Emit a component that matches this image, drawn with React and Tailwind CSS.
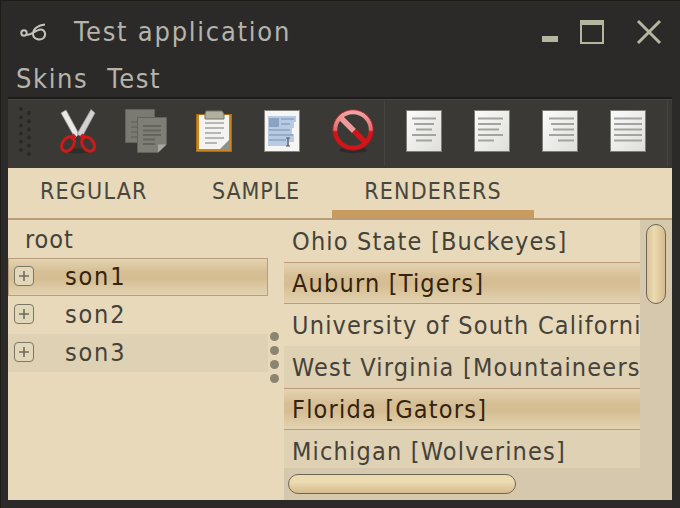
import React from 'react';

const font = { fontFamily: '"DejaVu Sans", sans-serif' };

const Logo = () => (
  <svg width="28" height="18" viewBox="0 0 28 18" fill="none" stroke="#c4c4bc" strokeWidth="2">
    <circle cx="4" cy="10" r="2.7" />
    <path d="M6.5 11.5 C 10 13, 14 8, 20 6.5 C 25 6, 26.5 12, 23.5 15 C 20 18, 13 16, 13 11 C 13 6, 18 2, 25 1.5" />
  </svg>
);

const Scissors = () => (
  <svg width="40" height="46" viewBox="0 0 40 46" fill="none">
    <ellipse cx="20" cy="43" rx="13" ry="2.5" fill="#2e2d2a" />
    <path d="M3 5 L8 2 L21 26 L17 30 Z" fill="#e8e8e6" stroke="#9a9a98" strokeWidth="0.7" />
    <path d="M33 1.5 L37 5 L24 29 L19 26 Z" fill="#d2d2d0" stroke="#9a9a98" strokeWidth="0.7" />
    <path d="M17 27 L13 31 M23 27 L27 31" stroke="#cc1b1b" strokeWidth="4" />
    <ellipse cx="10" cy="36" rx="5.5" ry="8" transform="rotate(35 10 36)" stroke="#cc1b1b" strokeWidth="3" />
    <ellipse cx="30" cy="36" rx="5.5" ry="8" transform="rotate(-35 30 36)" stroke="#cc1b1b" strokeWidth="3" />
  </svg>
);

const Copy = () => (
  <svg width="42" height="44" viewBox="0 0 42 44">
    <rect x="0.5" y="0.5" width="29" height="33" fill="#7b7a72" stroke="#64635b" />
    <path d="M6 13 H24 M6 18 H24 M6 23 H24 M6 28 H24" stroke="#6c6b63" strokeWidth="2" />
    <path d="M12.5 8.5 H41.5 V35 L33 43.5 H12.5 Z" fill="#7f7e76" stroke="#64635b" />
    <path d="M18 17 H36 M18 21.5 H36 M18 26 H36 M18 30.5 H30 M18 35 H30" stroke="#65645c" strokeWidth="2" />
    <path d="M33 43.5 V35.5 H41.5 Z" fill="#a9a9a2" />
  </svg>
);

const Paste = () => (
  <svg width="36" height="42" viewBox="0 0 36 42">
    <rect x="0.5" y="4.5" width="35" height="37" fill="#c9871d" stroke="#a76d14" />
    <path d="M3 5 H33 V39 H3 Z" fill="#f3f3f1" />
    <path d="M9 13 H28 M9 18 H28 M9 23 H25 M9 28 H28 M9 33 H21" stroke="#b6b6b2" strokeWidth="2" />
    <path d="M24 39 L33 30 V39 Z" fill="#8f8f8b" />
    <path d="M10 1 H26 L28 4 V9 H9 V4 Z" fill="#b1b09f" stroke="#75746a" />
  </svg>
);

const SelectAll = () => (
  <svg width="36" height="42" viewBox="0 0 36 42">
    <rect x="0.5" y="0.5" width="35" height="41" fill="#f5f5f3" stroke="#85857f" />
    <path d="M4 6 H32 V12 H30 V18 H28 V24 H30 V32 H25 V36 H4 Z" fill="#b9cbe3" />
    <rect x="5" y="8" width="10" height="9" fill="#8ba2c1" />
    <path d="M17 9 H30 M17 14 H26 M5 20 H26 M5 25 H29 M5 30 H22" stroke="#8ba2c1" strokeWidth="1.6" />
    <path d="M22 28 H26 M24 28 V36 M22 36 H26" stroke="#555" strokeWidth="1.2" />
  </svg>
);

const Stop = () => (
  <svg width="44" height="46" viewBox="0 0 44 46">
    <defs>
      <linearGradient id="ring" x1="0" y1="0" x2="0" y2="1">
        <stop offset="0" stopColor="#f0a6a6" />
        <stop offset="0.5" stopColor="#e66a6a" />
        <stop offset="0.55" stopColor="#d0141a" />
        <stop offset="1" stopColor="#d3151b" />
      </linearGradient>
    </defs>
    <ellipse cx="22" cy="42" rx="14" ry="3" fill="#2c2b29" />
    <path d="M9 9 L23 23" stroke="#ec9a9a" strokeWidth="5.5" />
    <path d="M23 23 L35 35" stroke="#d0151b" strokeWidth="5.5" />
    <circle cx="22" cy="22" r="18" fill="none" stroke="url(#ring)" strokeWidth="4.5" />
    <circle cx="22" cy="22" r="20.2" fill="none" stroke="#b5141a" strokeWidth="0.8" />
  </svg>
);

const Doc = ({ lines }) => (
  <svg width="36" height="42" viewBox="0 0 36 42">
    <defs>
      <linearGradient id="page" x1="0" y1="0" x2="1" y2="1">
        <stop offset="0" stopColor="#fbfbfa" />
        <stop offset="1" stopColor="#dededa" />
      </linearGradient>
    </defs>
    <rect x="0.5" y="0.5" width="35" height="41" fill="url(#page)" stroke="#7e7e78" />
    {lines.map(([x1, x2], i) => (
      <line key={i} x1={x1} x2={x2} y1={8.5 + i * 5.5} y2={8.5 + i * 5.5} stroke="#a3a39f" strokeWidth="2" />
    ))}
  </svg>
);

const Tool = ({ children, className = '' }) => (
  <div className={`w-[68px] flex justify-center items-center pb-[6px] shrink-0 ${className}`}>{children}</div>
);

const Gripper = () => (
  <div className="w-[36px] shrink-0 flex items-center justify-center pb-[6px]">
    <svg width="16" height="50" viewBox="0 0 16 50" fill="#2a2927">
      {[0, 1, 2, 3, 4, 5].map((i) => <circle key={i} cx="3" cy={3 + i * 8.2} r="2" />)}
      {[0, 1, 2, 3, 4, 5].map((i) => <circle key={i} cx="11" cy={7 + i * 8.2} r="2" />)}
    </svg>
  </div>
);

const selected = 'bg-[linear-gradient(to_bottom,#e3d3b2_0%,#d6bf95_35%,#d5bd92_55%,#e3d3b2_100%)] border-y border-[#bb9c7c]';

const ExpandBox = () => (
  <span className="w-[20px] h-[20px] mb-[2px] rounded-[4px] border border-[#7b7666] bg-[#e0d8b8] flex items-center justify-center shrink-0">
    <svg width="12" height="12" viewBox="0 0 12 12" stroke="#6f6b5e" strokeWidth="1.6">
      <path d="M6 1 V11 M1 6 H11" />
    </svg>
  </span>
);

const TreeRow = ({ label, sel, alt }) => (
  <div className={`h-[38px] flex items-center ${alt ? 'bg-[#dfd1b3]' : ''} ${sel ? `${selected} border-x pl-[5px] text-[#33230f]` : 'pl-[6px] text-[#45423a]'}`}>
    <ExpandBox />
    <span className="ml-[31px] tracking-[1.8px]">{label}</span>
  </div>
);

const teams = [
  ['Ohio State [Buckeyes]', ''],
  ['Auburn [Tigers]', 'sel'],
  ['University of South California [Trojans]', ''],
  ['West Virginia [Mountaineers]', 'alt'],
  ['Florida [Gators]', 'sel'],
  ['Michigan [Wolverines]', 'alt'],
];

export default function App() {
  return (
    <div style={font} className="w-[680px] h-[508px] bg-[#2b2a28] border-t border-l border-[#1f1b17] flex flex-col overflow-hidden font-stretch-condensed">
      <div className="h-[62px] shrink-0 flex items-center pl-[19px] pr-[18px] text-[#b4b4ad]">
        <Logo />
        <span className="ml-[26px] text-[27px] tracking-[1.75px]">Test application</span>
        <div className="ml-auto flex items-center">
          <span className="w-[16px] h-[6px] bg-[#b6b6a0] mt-[14px]" />
          <span className="w-[24px] h-[24px] ml-[22px] border-2 border-t-[5px] border-[#b6b6a0]" />
          <svg width="26" height="26" viewBox="0 0 26 26" className="ml-[32px]" stroke="#b6b6a0" strokeWidth="3">
            <path d="M2 2 L24 24 M24 2 L2 24" />
          </svg>
        </div>
      </div>
      <div className="h-[34px] shrink-0 pl-[15px] flex gap-[19px] text-[#b4b4ad] text-[27px] leading-[32px] tracking-[1.6px]">
        <span>Skins</span>
        <span>Test</span>
      </div>
      <div className="flex-1 min-h-0 ml-[7px] mr-[8px] mb-[8px] flex flex-col">
        <div className="h-[71px] shrink-0 bg-[#3a3936] border-t-[2px] border-[#1d1c1a] flex shadow-[inset_0_1px_0_#464542]">
          <Gripper />
          <Tool><Scissors /></Tool>
          <Tool><Copy /></Tool>
          <Tool><Paste /></Tool>
          <Tool><SelectAll /></Tool>
          <Tool className="pl-[6px]"><Stop /></Tool>
          <div className="w-[6px] shrink-0 my-[2px] border-l border-[#454441]" />
          <Tool><Doc lines={[[6, 30], [8, 28], [10, 26], [6, 30], [10, 26]]} /></Tool>
          <Tool><Doc lines={[[4, 29], [4, 27], [4, 25], [4, 29], [4, 20]]} /></Tool>
          <Tool><Doc lines={[[7, 32], [9, 32], [11, 32], [7, 32], [16, 32]]} /></Tool>
          <Tool><Doc lines={[[4, 32], [4, 32], [4, 32], [4, 32], [4, 32]]} /></Tool>
          <div className="ml-[5px] my-[2px] border-l border-[#454441]" />
        </div>
        <div className="h-[52px] shrink-0 bg-[#e7d9b9] border-b-[2px] border-[#b99b76] flex text-[23px] tracking-[1.2px] text-[#4a473e]">
          <div className="px-[32px] pt-[6px] w-[171px] whitespace-nowrap">REGULAR</div>
          <div className="px-[33px] pt-[6px] w-[153px] whitespace-nowrap tracking-[0.9px]">SAMPLE</div>
          <div className="w-[202px] pt-[6px] text-center border-b-[8px] border-[#c89b60] h-[50px] whitespace-nowrap">RENDERERS</div>
        </div>
        <div className="flex-1 min-h-0 flex bg-[#e7d9b9] text-[25px] text-[#45423a]">
          <div className="w-[260px] shrink-0">
            <div className="h-[38px] flex items-center pt-[2px] pl-[17px] tracking-[0.9px]">root</div>
            <TreeRow label="son1" sel />
            <TreeRow label="son2" />
            <TreeRow label="son3" alt />
          </div>
          <div className="w-[12px] shrink-0 flex flex-col items-center justify-center gap-[5px] pb-[6px]">
            {[0, 1, 2, 3].map((i) => <span key={i} className="w-[9px] h-[9px] rounded-full bg-[#8b8470]" />)}
          </div>
          <div className="w-[4px] shrink-0" />
          <div className="w-[388px] shrink-0 grid grid-cols-[356px_32px] grid-rows-[248px_32px] bg-[#d5c8ac]">
            <div className="overflow-hidden bg-[#e7d9b9]">
              {teams.map(([name, kind]) => (
                <div
                  key={name}
                  className={`h-[42px] flex items-center pt-[1px] pl-[8px] whitespace-nowrap tracking-[1.2px] ${kind === 'alt' ? 'bg-[#dfd1b3]' : ''} ${kind === 'sel' ? `${selected} text-[#33230f]` : ''}`}
                >
                  {name}
                </div>
              ))}
            </div>
            <div className="pl-[6px] pt-[4px]">
              <div className="w-[20px] h-[80px] rounded-[10px] border border-[#6e6655] bg-[linear-gradient(to_right,#d9c49c,#ecdab0_40%,#d4bb8e)]" />
            </div>
            <div className="pl-[4px] pt-[6px]">
              <div className="w-[228px] h-[20px] rounded-[10px] border border-[#6e6655] bg-[linear-gradient(to_bottom,#ecdab0,#ecdab0_40%,#d4bb8e)]" />
            </div>
            <div />
          </div>
        </div>
      </div>
    </div>
  );
}
